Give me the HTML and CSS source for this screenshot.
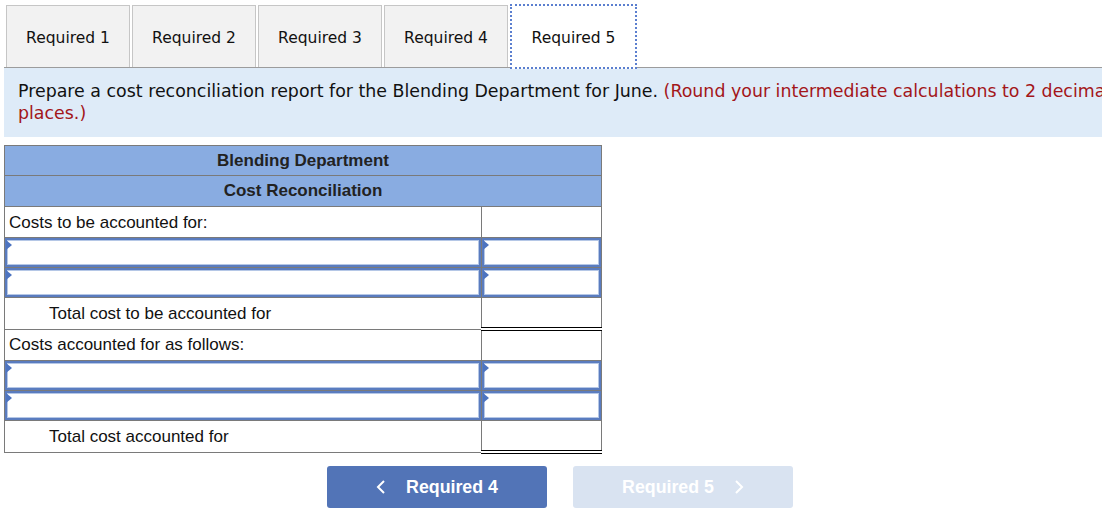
FILE: index.html
```html
<!DOCTYPE html>
<html lang="en">
<head>
<meta charset="utf-8">
<title>Required 5</title>
<link rel="stylesheet" href="styles.css">
</head>
<body>
<div class="tabs">
  <div class="tab">Required 1</div>
  <div class="tab">Required 2</div>
  <div class="tab">Required 3</div>
  <div class="tab">Required 4</div>
  <div class="tab tab-active">Required 5</div>
</div>
<div class="panel">
  <p class="instr">Prepare a cost reconciliation report for the Blending Department for June. <span class="note">(Round your intermediate calculations to 2 decimal</span><br><span class="note">places.)</span></p>
</div>
<table class="recon">
  <colgroup><col class="c1"><col class="c2"></colgroup>
  <tr class="hdr hdr1"><th colspan="2">Blending Department</th></tr>
  <tr class="hdr hdr2"><th colspan="2">Cost Reconciliation</th></tr>
  <tr><td class="lbl">Costs to be accounted for:</td><td class="val"></td></tr>
  <tr><td class="inp"><div class="box"><span class="tri"></span></div></td><td class="inp"><div class="box"><span class="tri"></span></div></td></tr>
  <tr><td class="inp"><div class="box"><span class="tri"></span></div></td><td class="inp"><div class="box"><span class="tri"></span></div></td></tr>
  <tr><td class="lbl indent">Total cost to be accounted for</td><td class="val total"></td></tr>
  <tr><td class="lbl">Costs accounted for as follows:</td><td class="val"></td></tr>
  <tr><td class="inp"><div class="box"><span class="tri"></span></div></td><td class="inp"><div class="box"><span class="tri"></span></div></td></tr>
  <tr><td class="inp"><div class="box"><span class="tri"></span></div></td><td class="inp"><div class="box"><span class="tri"></span></div></td></tr>
  <tr><td class="lbl indent">Total cost accounted for</td><td class="val total"></td></tr>
</table>
<div class="nav">
  <button class="btn btn-prev"><svg class="chev" width="10" height="16" viewBox="0 0 10 16"><polyline points="8,2 2,8 8,14" fill="none" stroke="#fff" stroke-width="2"/></svg><span>Required 4</span></button>
  <button class="btn btn-next" disabled><span>Required 5</span><svg class="chev" width="10" height="16" viewBox="0 0 10 16"><polyline points="2,2 8,8 2,14" fill="none" stroke="#fff" stroke-width="2"/></svg></button>
</div>
</body>
</html>
```
FILE: styles.css
```css
html, body {
  margin: 0;
  padding: 0;
  background: #fff;
  overflow: hidden;
}
body {
  width: 1102px;
  font-family: "DejaVu Sans", Verdana, sans-serif;
  color: #111;
}
.tabs {
  display: flex;
  align-items: flex-end;
  height: 67px;
  padding-left: 6px;
}
.tab {
  box-sizing: border-box;
  width: 124px;
  height: 62px;
  margin-right: 2px;
  border: 1px solid #c6c6c6;
  border-bottom: none;
  background: #f2f2f2;
  display: flex;
  align-items: center;
  justify-content: center;
  padding-top: 3px;
  font-size: 15.5px;
  color: #111;
}
.tab-active {
  position: relative;
  z-index: 1;
  width: 127px;
  height: 65px;
  margin-left: 0;
  margin-bottom: -2px;
  background: #fff;
  border: 2px dotted #5b7fcf;
  padding-top: 2px;
}
.panel {
  margin-left: 4px;
  width: 1200px;
  border-top: 1px solid #9c9c9c;
  background: #deebf8;
  padding: 12px 0 13px 14px;
}
.instr {
  margin: 0;
  font-size: 17.4px;
  line-height: 22px;
  white-space: nowrap;
}
.note {
  color: #a3161a;
}
.recon {
  margin: 8px 0 0 4px;
  border-collapse: collapse;
  table-layout: fixed;
  width: 597px;
  font-family: "Liberation Sans", Arial, sans-serif;
  font-size: 17px;
  color: #111;
}
.c1 { width: 477px; }
.c2 { width: 120px; }
.recon th, .recon td {
  border: 1px solid #7a7a7a;
  padding: 0;
}
.hdr th {
  height: 29px;
  background: #89ace1;
  font-weight: bold;
  color: #222;
  text-align: center;
}
.hdr2 th {
  height: 30px;
}
.recon td {
  height: 29px;
}
.lbl {
  padding-left: 4px !important;
  text-align: left;
  padding-top: 1px !important;
}
.indent {
  padding-left: 44px !important;
}
.val.total {
  border-top: 1px solid #000;
  border-bottom: 4px double #000;
}
.inp {
  vertical-align: top;
}
.box {
  position: relative;
  box-sizing: border-box;
  height: 29px;
  border: 2px solid #5a7cbf;
  box-shadow: inset 0 0 0 1px #b5c7e6;
  background: #fff;
}
.tri {
  position: absolute;
  left: -1px;
  top: 0;
  width: 0;
  height: 0;
  border-top: 5px solid transparent;
  border-bottom: 5px solid transparent;
  border-left: 6px solid #4d74c0;
}
.nav {
  display: flex;
  gap: 26px;
  padding-left: 327px;
  margin-top: 12px;
}
.btn {
  box-sizing: border-box;
  width: 220px;
  height: 42px;
  border: none;
  border-radius: 3px;
  display: flex;
  align-items: center;
  justify-content: center;
  gap: 20px;
  font-family: "Liberation Sans", Arial, sans-serif;
  font-weight: bold;
  font-size: 17.8px;
  color: #fff;
  padding: 0;
}
.btn-prev {
  background: #5274b7;
}
.btn-next {
  background: #d9e3f1;
}
.chev {
  display: block;
}
```
